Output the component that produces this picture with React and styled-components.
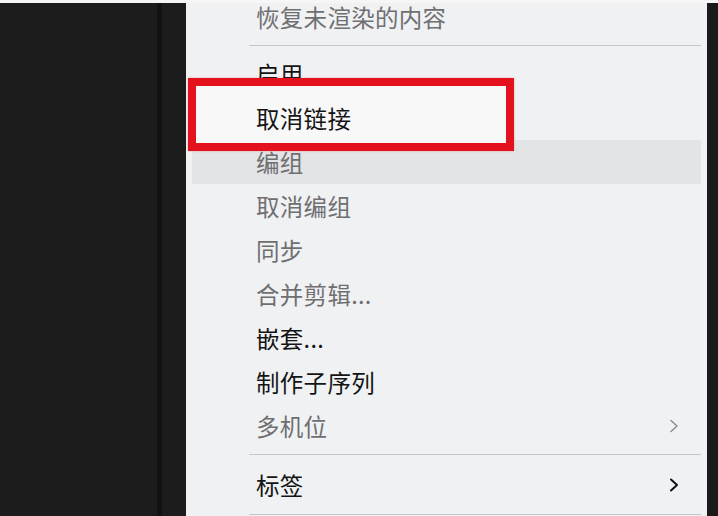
import React from "react";
import styled, { createGlobalStyle, css } from "styled-components";

const Global = createGlobalStyle`
  html, body { margin: 0; padding: 0; background: #1c1c1c; }
  body { font-family: "Noto Sans CJK SC", "Noto Sans", sans-serif; }
`;

const Page = styled.div`
  width: 718px;
  height: 516px;
  overflow: hidden;
  display: flex;
  flex-direction: column;
  background: #1c1c1c;
`;

const TopEdge = styled.div`
  height: 3px;
  flex: none;
  background: #f6f6f6;
`;

const Body = styled.div`
  flex: 1;
  display: flex;
  min-height: 0;
`;

const SidePanel = styled.div`
  width: 186px;
  flex: none;
  display: grid;
  grid-template-columns: 157px 5px 1fr;
  background: #1c1c1c;
`;

const SideDivider = styled.div`
  grid-column: 2;
  background: #121212;
`;

const RightEdge = styled.div`
  width: 11px;
  flex: none;
  background: #1a1a1a;
`;

const Menu = styled.div`
  flex: 1;
  background: #f0f1f3;
  overflow: hidden;
`;

const List = styled.div`
  display: flex;
  flex-direction: column;
  margin-top: -8px;
`;

const Row = styled.div`
  position: relative;
  height: ${(p) => (p.$tall ? 47 : 44)}px;
  margin: 0 6px;
  padding: 0 22px 0 64px;
  display: flex;
  align-items: center;
  justify-content: space-between;
  font-size: 23.5px;
  letter-spacing: 0.3px;
  color: ${(p) => (p.$disabled ? "#6f6f72" : "#141414")};
  background: ${(p) => (p.$hover ? "#e3e4e6" : "transparent")};

  ${(p) =>
    p.$boxed &&
    css`
      /* red annotation frame drawn over the menu */
      &::before {
        content: "";
        position: absolute;
        left: -4px;
        top: -18px;
        width: 326px;
        height: 73px;
        box-sizing: border-box;
        border: 8px solid #e3121d;
        background: #f8f8f9;
        box-shadow: 0 0 2px rgba(230, 30, 40, 0.35);
        z-index: 1;
      }
    `}
`;

const Label = styled.span`
  ${(p) =>
    p.$front &&
    css`
      position: relative;
      z-index: 2;
    `}
`;

const Separator = styled.div`
  height: 13px;
  display: flex;
  align-items: center;
  margin: 0 6px 0 63px;
  &::after {
    content: "";
    flex: 1;
    height: 1px;
    background: #c6c7ca;
  }
`;

const Chevron = ({ color, width }) => (
  <svg width="10" height="14" viewBox="0 0 10 14" aria-hidden="true">
    <path d="M2 1.5 L8 7 L2 12.5" fill="none" stroke={color} strokeWidth={width} strokeLinecap="round" strokeLinejoin="round" />
  </svg>
);

const items = [
  { label: "恢复未渲染的内容", disabled: true },
  { sep: true },
  { label: "启用" },
  { label: "取消链接", boxed: true },
  { label: "编组", disabled: true, hover: true },
  { label: "取消编组", disabled: true },
  { label: "同步", disabled: true },
  { label: "合并剪辑...", disabled: true },
  { label: "嵌套..." },
  { label: "制作子序列" },
  { label: "多机位", disabled: true, sub: true },
  { sep: true },
  { label: "标签", sub: true, tall: true },
  { sep: true },
];

export default function App() {
  return (
    <>
      <Global />
      <Page>
        <TopEdge />
        <Body>
          <SidePanel>
            <SideDivider />
          </SidePanel>
          <Menu>
            <List>
              {items.map((it, i) =>
                it.sep ? (
                  <Separator key={i} />
                ) : (
                  <Row
                    key={i}
                    $disabled={it.disabled}
                    $hover={it.hover}
                    $boxed={it.boxed}
                    $tall={it.tall}
                  >
                    <Label $front={it.boxed}>{it.label}</Label>
                    {it.sub && (
                      <Chevron color={it.disabled ? "#8a8a8c" : "#111"} width={it.disabled ? 1.4 : 2} />
                    )}
                  </Row>
                )
              )}
            </List>
          </Menu>
          <RightEdge />
        </Body>
      </Page>
    </>
  );
}
